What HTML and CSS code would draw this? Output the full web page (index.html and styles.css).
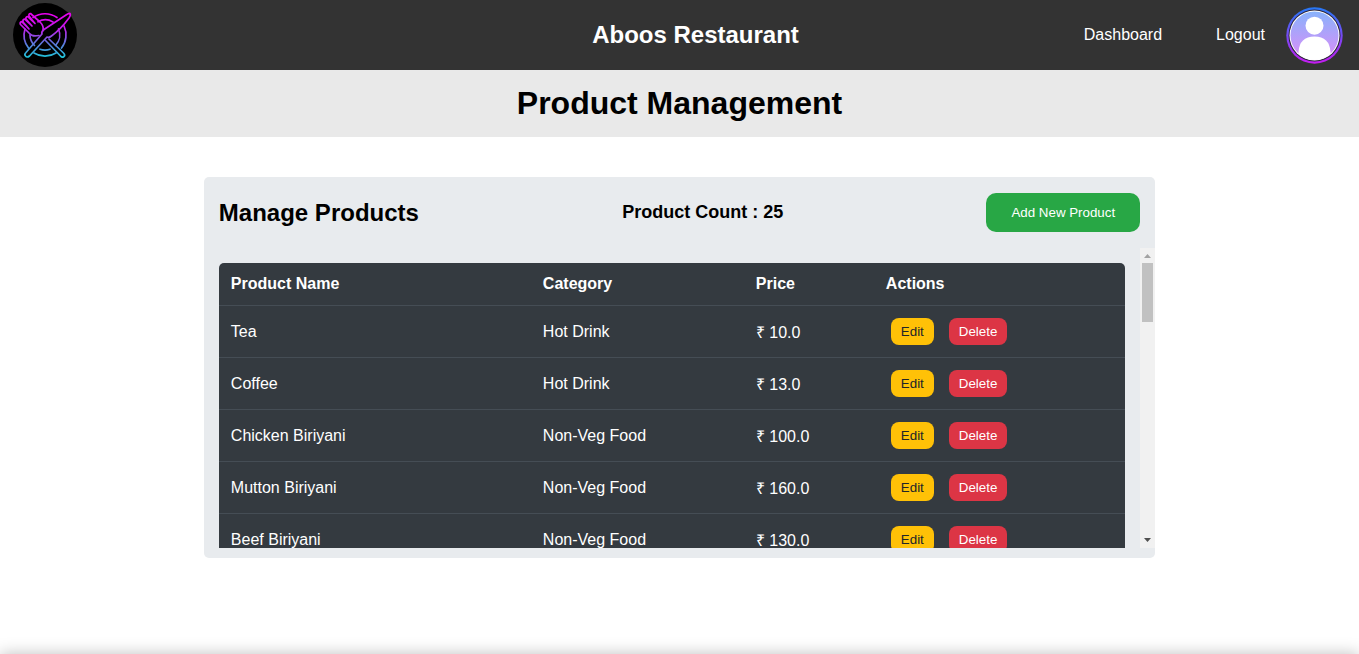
FILE: index.html
```html
<!DOCTYPE html>
<html lang="en">
<head>
<meta charset="utf-8">
<title>Product Management</title>
<link rel="stylesheet" href="styles.css">
</head>
<body>
<div class="page">
<header class="topbar">
  <svg class="logo" viewBox="0 0 64 64" aria-hidden="true">
    <defs>
      <linearGradient id="neon" gradientUnits="userSpaceOnUse" x1="0" y1="10" x2="0" y2="55">
        <stop offset="0" stop-color="#e800ee"/>
        <stop offset="0.35" stop-color="#c41cec"/>
        <stop offset="0.65" stop-color="#6470dc"/>
        <stop offset="1" stop-color="#1cc8d8"/>
      </linearGradient>
    </defs>
    <circle cx="32" cy="32" r="32" fill="#000"/>
    <g fill="none" stroke="url(#neon)" stroke-width="1.7" stroke-linecap="round" stroke-linejoin="round">
      <path d="M20 14.500A21 21 0 0 1 44 14.500M51 23A21 21 0 0 1 48.500 45M43 50A21 21 0 0 1 21 50M15.500 45A21 21 0 0 1 12 26"/>
      <path d="M25 18.800A15 15 0 0 1 40 19M45.500 26A15 15 0 0 1 42.500 42.500M37 46.200A15 15 0 0 1 27 46.200M21.500 42.500A15 15 0 0 1 17 32"/>
      <path d="M57 10.500Q58 12 56 15Q48 26 38.500 33Q36 35 34 34L16.500 53Q14 55 12.500 53Q11 51.500 13 49.500L29 31Q28 29 31 26.500L53 12Q56 10 57 10.500Z"/>
      <path d="M16.500 30.500L7.500 21.500Q6.500 19.500 8.500 18.500L16 26L10 19Q9.500 16.500 11.500 16L19 23L13 16Q12.500 14 14.500 13.500L22 20.500L16 13Q15.500 10.500 17.500 10.500L27 19Q31 23 30 27M16.500 30.500Q19 34 26 32.500M36 36L50.500 50Q52.500 52 51 53.500Q49 55 47.500 53L32.500 37.500"/>
    </g>
  </svg>
  <div class="brand">Aboos Restaurant</div>
  <nav class="nav">
    <a class="nav-link" href="#dashboard">Dashboard</a>
    <a class="nav-link" href="#logout">Logout</a>
    <svg class="avatar" viewBox="0 0 57 57" aria-hidden="true">
      <defs>
        <linearGradient id="ring" x1="0" y1="0" x2="0" y2="1">
          <stop offset="0" stop-color="#2678f4"/><stop offset="1" stop-color="#c41cf0"/>
        </linearGradient>
        <linearGradient id="fill" x1="0" y1="0" x2="0" y2="1">
          <stop offset="0" stop-color="#88b2fb"/><stop offset="1" stop-color="#dd8df8"/>
        </linearGradient>
        <clipPath id="disc"><circle cx="28.5" cy="28.5" r="24.5"/></clipPath>
      </defs>
      <circle cx="28.5" cy="28.5" r="28.2" fill="url(#ring)"/>
      <circle cx="28.5" cy="28.5" r="26" fill="#2b2438"/>
      <circle cx="28.5" cy="28.5" r="25" fill="#fff"/>
      <circle cx="28.5" cy="28.5" r="24" fill="url(#fill)"/>
      <g clip-path="url(#disc)" fill="#fff">
        <circle cx="28.5" cy="18.7" r="9"/>
        <path d="M12.500 54V45Q13.500 29.500 28.500 29.500T44.500 45V54Z"/>
      </g>
    </svg>
  </nav>
</header>
<h1 class="banner">Product Management</h1>
<main class="panel">
  <div class="panel-head">
    <h2 class="panel-title">Manage Products</h2>
    <p class="count">Product Count : 25</p>
    <button class="add" type="button">Add New Product</button>
  </div>
  <div class="list">
    <div class="scroller">
      <table class="products">
        <thead>
          <tr><th class="col-name">Product Name</th><th class="col-category">Category</th><th class="col-price">Price</th><th>Actions</th></tr>
        </thead>
        <tbody>
          <tr><td>Tea</td><td>Hot Drink</td><td>₹ 10.0</td><td><button class="btn edit" type="button">Edit</button><button class="btn delete" type="button">Delete</button></td></tr>
          <tr><td>Coffee</td><td>Hot Drink</td><td>₹ 13.0</td><td><button class="btn edit" type="button">Edit</button><button class="btn delete" type="button">Delete</button></td></tr>
          <tr><td>Chicken Biriyani</td><td>Non-Veg Food</td><td>₹ 100.0</td><td><button class="btn edit" type="button">Edit</button><button class="btn delete" type="button">Delete</button></td></tr>
          <tr><td>Mutton Biriyani</td><td>Non-Veg Food</td><td>₹ 160.0</td><td><button class="btn edit" type="button">Edit</button><button class="btn delete" type="button">Delete</button></td></tr>
          <tr><td>Beef Biriyani</td><td>Non-Veg Food</td><td>₹ 130.0</td><td><button class="btn edit" type="button">Edit</button><button class="btn delete" type="button">Delete</button></td></tr>
          <tr class="rest"><td colspan="4"></td></tr>
        </tbody>
      </table>
    </div>
    <div class="scrollbar" aria-hidden="true">
      <svg class="arrow" viewBox="0 0 15 15"><path d="M4 10L7.500 6L11 10Z" fill="#a3a3a3"/></svg>
      <div class="thumb"></div>
      <svg class="arrow" viewBox="0 0 15 15"><path d="M4 5L7.500 9L11 5Z" fill="#505050"/></svg>
    </div>
  </div>
</main>
<footer class="footer"></footer>
</div>
</body>
</html>
```
FILE: styles.css
```css
* { box-sizing: border-box; }
body {
  margin: 0;
  background: #fff;
  color: #000;
  font-family: "Liberation Sans", Arial, sans-serif;
  font-size: 16px;
}
button { font-family: inherit; line-height: 15px; }
.page {
  display: flex;
  flex-direction: column;
  height: 100vh;
  overflow: hidden;
}
.topbar {
  display: grid;
  grid-template-columns: 1fr auto 1fr;
  align-items: center;
  flex: none;
  padding: 3px 16px 3px 13px;
  background: #333;
  color: #fff;
}
.logo { display: block; width: 64px; height: 64px; }
.brand { margin-left: 35px; font-size: 24px; font-weight: bold; }
.nav { display: flex; justify-content: flex-end; align-items: center; }
.nav-link { margin-right: 54px; color: #fff; text-decoration: none; }
.nav-link + .nav-link { margin-right: 21px; }
.avatar { width: 57px; height: 57px; }
.banner {
  flex: none;
  margin: 0;
  padding: 15px;
  background: #e9e9e9;
  font-size: 32px;
  line-height: 37px;
  text-align: center;
}
.panel {
  flex: none;
  width: 70%;
  margin: 40px auto;
  padding: 16px 0 10px;
  border-radius: 5px;
  background: #e8ebee;
}
.panel-head {
  display: flex;
  justify-content: space-between;
  align-items: center;
  padding: 0 15px 16px;
}
.panel-title { margin: 0; font-size: 24px; }
.count { margin: 0; font-size: 18px; font-weight: bold; }
.add {
  padding: 12px 25px;
  border: 0;
  border-radius: 10px;
  background: #28a745;
  color: #fff;
}
.list { display: flex; height: 300px; }
.scroller {
  flex: 1;
  padding: 15px 15px 0;
  overflow-y: auto;
  scrollbar-width: none;
}
.scrollbar {
  display: grid;
  grid-template-rows: 15px 1fr 15px;
  width: 15px;
  background: #f1f1f1;
}
.arrow { display: block; width: 15px; height: 15px; }
.thumb { height: 59px; margin: 0 2px; background: #c1c1c1; }
.products {
  width: 100%;
  table-layout: fixed;
  border-spacing: 0;
  border-radius: 5px;
  background: #343a40;
  color: #fff;
  overflow: hidden;
}
.products th, .products td {
  padding: 12px;
  border-bottom: 1px solid #454d55;
  text-align: left;
}
.products td { height: 52px; }
.products .rest td { height: 1040px; }
.col-name { width: 312px; }
.col-category { width: 213px; }
.col-price { width: 130px; }
.btn {
  margin: 0 5px;
  padding: 6px 10px;
  border: 0;
  border-radius: 8px;
}
.btn + .btn { margin-left: 10px; }
.edit { background: #ffc107; color: #212529; }
.delete { background: #dc3545; color: #fff; }
.footer {
  flex: none;
  height: 60px;
  margin-top: 56px;
  background: #333;
  box-shadow: 0 0 15px rgba(0, 0, 0, 0.25);
}
```
